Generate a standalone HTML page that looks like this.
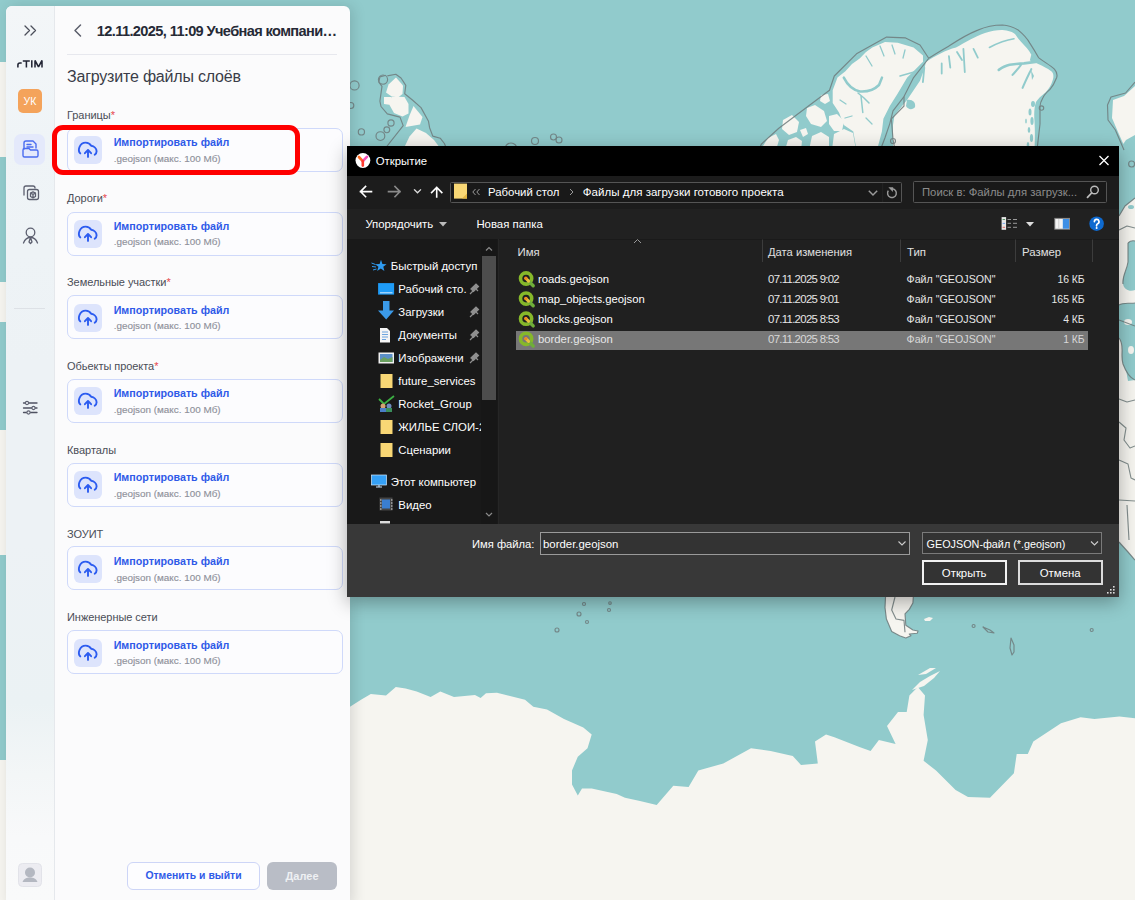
<!DOCTYPE html>
<html><head><meta charset="utf-8">
<style>
*{box-sizing:border-box;margin:0;padding:0}
html,body{width:1135px;height:900px;overflow:hidden;background:#91cbcc;font-family:"Liberation Sans",sans-serif}
#map{position:absolute;left:0;top:0;width:1135px;height:900px}
.w{position:absolute;white-space:nowrap}
.b{position:absolute}
svg.ico{position:absolute;overflow:visible}
</style></head><body>
<svg id="map" width="1135" height="900" viewBox="0 0 1135 900">
<rect width="1135" height="900" fill="#91cbcc"/>
<g fill="#f6f5f0" stroke="none">
<!-- bottom antarctica -->
<path d="M350,706.7 L361,699.7 370.8,694 386,695.5 395.8,687 405.6,688.6 416.7,691.4 430.6,697 440.3,691.4 454,697 475,695 480.6,698 486,693.3 497,692.8 525,699.7 533.3,706.7 547,709.4 564,719 583.3,727.5 591.7,734.4 587.5,748.3 577.8,756.7 572,770.5 572,784.4 577.8,795.5 582,788.6 591.7,788.6 616.7,794 625,797.8 640,801 656.7,805 673.3,785.8 688.6,787 698.3,770.5 723.3,763.6 751,748.3 770.6,751 792.8,756 801,765 817.8,763.6 815,741.4 826,734.4 834.4,737.2 859.4,747 870.6,751 878.9,740 895.6,744 887,726 898,712 906.7,712 909.4,695.5 917.8,687 925,695.5 923.6,715 927.8,740 923.6,760.8 936,770.5 955.6,790 968,797 990,797.8 1013.9,773.3 1016.7,754 1027.8,754 1033.3,741.4 1061,723.3 1080.6,717.2 1094.4,719 1119.4,716.4 1135,718.3 1135,900 350,900Z"/>
<!-- peninsula islands -->
<path d="M912,690 L920,682 930,676 940,671 934,678 924,686Z"/>
<path d="M918,675 L930,668 936,668 926,674Z"/>
<!-- lobe1 main -->
<path d="M845.4,71.2 L852,64 859.7,58.5 866,52 872.3,47.4 885,41.9 897.7,42.7 913.6,47.4 923,55.4 923,61.7 913.6,71.2 907.2,77.6 897.7,93.4 889.8,106.1 883.4,118.8 881.9,131.5 877,150 856.5,150 853.3,131.5 843.8,125.1 839,112.5 832.7,103 832.7,90.3 837.5,77.6Z"/>
<!-- lobe1 islands -->
<path d="M763,146 L768,138 776,134 779,140 776,150 762,150Z"/>
<path d="M783,120 L792,115 799,122 797,132 789,135 782,129Z"/>
<path d="M807,108 L815,105 824,111 827,121 821,127 811,124 806,116Z"/>
<path d="M821,95 L828,94 830,101 825,104 820,101Z"/>
<path d="M829,116 L837,114 844,121 842,131 834,131 829,124Z"/>
<path d="M785,150 L788,140 796,137 802,141 801,150Z"/>
<path d="M809,150 L812,136 821,132 829,137 829,150Z"/>
<path d="M832,150 L834,134 844,129 853,133 856,150Z"/>
<path d="M800,130 L806,128 808,134 803,137Z"/>
<!-- lobe2 -->
<path d="M925.8,62 C935,56 946,50 956,47.5 C966,42 976,36 985,33 C991,31 997,30 1002.4,30.1 C1008,30.5 1013,32 1015.4,34.5 C1017,37 1019,39.5 1021,41.7 C1025,46 1029,50 1031.3,54.7 L1029.8,60.5 C1036,63 1041,65 1045.7,67.7 C1049,69.5 1052,71 1053,73.5 C1054,77 1053,80 1051.5,83.6 C1050,87 1048,90 1045.7,92.3 C1041,96 1038,99 1036,102 C1034,108 1034,115 1034.5,121 C1035,130 1035,138 1034.5,150 L893,150 893,125 894.5,115.6 907.2,99.8 913.6,90.3 920,80.7 924.7,68Z"/>
<!-- left island group -->
<path d="M396,77.5 L403,85.5 402.5,94 398,97.5 391,96 386,92.5 388.5,84.5Z"/>
<path d="M391.5,96.5 L404.5,97 408.5,104 408.5,113.5 402.5,116.5 394,113 389.5,105Z"/>
<path d="M384,97 L391,97 391,105 384,104Z"/>
<path d="M413.5,106 L422.5,117 420,124.5 405.5,127 409.5,115.5Z"/>
<path d="M416.5,128.5 L426,133 434,140 441.5,150 403,150 409.5,136.5Z"/>
<!-- right island -->
<path d="M1113,100 L1124,96 1135,86 1135,150 1126,150 1118,132 1112,118Z"/>
<!-- right strip europe -->
<path d="M1119,216 L1125,206 1135,198 1135,560 1128,552 1119,542Z"/>
</g>
<g fill="#91cbcc">
<path d="M1128,243 C1131,240 1135,241 1135,241 L1135,290 C1130,292 1124,290 1123,284 C1122,276 1127,270 1128,262Z"/>
<path d="M1119,305 C1124,302 1130,304 1135,303 L1135,380 C1130,378 1126,372 1123,364 C1120,355 1125,345 1119,338Z"/>
<path d="M1126,370 L1135,368 1135,380 1128,381Z"/>
<ellipse cx="1131" cy="207" rx="3" ry="2"/>
</g>
<g fill="#f6f5f0">
<ellipse cx="1128" cy="322" rx="4" ry="3"/><ellipse cx="1131" cy="350" rx="3" ry="4"/>

<!-- south america tip -->
<path d="M885.5,597 L885,607.6 886.4,619 891.7,631.4 899.6,635.8 905.8,638 911,635.8 909.3,634 917.3,633.2 918,631 912.9,630 905.8,625.2 905,613.8 909.3,609.4 912.9,603 913.3,597Z"/>
<path d="M924,619 L929,617 933,618 930,621 925,621Z"/>
</g>
<!-- fjords -->
<g fill="none" stroke="#91cbcc" stroke-linecap="round" stroke-linejoin="round">
<path d="M843.8,77.6 C848,86 853,90 860,91.5 C868,92 875,89 879,85 L882,77.6" stroke-width="2.5"/>
<path d="M858,93 L864,98 869,103 M861,96 L862.8,112.5" stroke-width="1.5"/>
<path d="M866,56 L872,66 M880,46 L884,56 M892,45 L895,54 M905,50 L903,58" stroke-width="1.3"/>
<path d="M900,76 L914,72" stroke-width="1.5"/>
<path d="M840,100 L846,104 M845,118 L852,116 M866,118 L872,124" stroke-width="1.3"/>
<path d="M963.4,48.9 L964.8,72 M948.9,56.1 L950.3,67.7 M941.7,63.4 L941.7,73.5 M924.3,67.7 L922.9,82.1 M973.5,48.9 L977.8,57.6 M957,52 L962,60" stroke-width="1.8"/>
<path d="M989.4,47.5 C996,44 1006,40 1014,38.8" stroke-width="1.6"/>
<path d="M998.8,69.9 C1003,67 1006,65.5 1009.6,64.8 C1015,64 1020,63.5 1024,63.4 L1035.6,61.9" stroke-width="2.6"/>
<path d="M1021,64.8 C1018,69 1015,72 1012.5,74.9 M1031.3,69.1 C1028,76 1025,82 1022.6,87.9" stroke-width="2"/>
</g>
<g fill="#91cbcc">
<path d="M907,100 C912,99 916,102 915,107 C913,110 908,110 906,106Z"/>
<ellipse cx="1033" cy="104" rx="2" ry="3"/><ellipse cx="1030" cy="112" rx="1.5" ry="3.5"/><ellipse cx="1032" cy="121" rx="1.6" ry="4"/><ellipse cx="1029" cy="130" rx="1.3" ry="3"/><ellipse cx="1031.5" cy="138" rx="1.6" ry="4"/><ellipse cx="1028" cy="145" rx="1.3" ry="3"/><ellipse cx="1026" cy="121" rx="0.8" ry="2.5"/><path d="M1031,70 L1034,76 1032,80Z"/>
<path d="M1119,150 L1126,140 1135,135 1135,150Z"/>
</g>
<!-- grey outlines -->
<g fill="none" stroke="#6f7c7d" stroke-width="1.15" opacity="0.85" stroke-linejoin="round">
<path d="M759,150 L761.3,144.2 778.8,128.3 829.5,90.3 834.3,76 856.5,53.8 886.6,37.1 905.6,37.9 920,45 928.7,58.3 C935,54 942,50 948.9,46 C958,40 968,34 977.8,30.1 C985,27 994,25 1002.4,25 C1009,25.5 1014,27.5 1018.3,30.1 C1023,34 1027,38 1029.8,43.1 C1033,48 1036,53 1038.5,57.6 C1044,62 1050,65 1054.4,69.1 C1057,72 1057.5,75 1056.6,77.8 C1055,82 1053,86 1050,89.4 C1047,92 1044,95 1042.8,98 C1041,101 1040,104 1040,106.7 L1040,124 1037,150"/>
<path d="M928.6,58.5 L913.6,77.6 904,96.6 893,110.9 889.8,123.6 885,137.8 880.3,150"/>
<path d="M904,96.6 L904,106 891.4,118.8 893,139.4 895,150"/>
<circle cx="893" cy="141" r="2.5"/>
<path d="M387.3,75.9 L395.8,74.3 401,78 405.8,85.4 404.7,93.8 412.7,100.2 421,107.6 428.5,121.3 429.6,127.7 432.8,136.1 440.2,138.2 444.4,143.5 447,150"/>
<path d="M384,150 L403.2,125.6 400,117.1 387.3,113.9 381,106.5 379.9,101.2 382,86.4 378.8,82.2 379.9,76.9 386.2,75.3"/>
<path d="M1135,82 L1125.6,93 1111,97 1107.5,105 1108,120 1115.4,130 1124,150"/>
<path d="M885.5,597 L885,607.6 886.4,619 891.7,631.4 899.6,635.8 905.8,638 911,635.8 909.3,634 917.3,633.2 918,631 912.9,630 905.8,625.2 905,613.8 909.3,609.4 912.9,603 913.3,597"/>
<path d="M895,597 L891.7,610 896,619 904,620.4 905,632.3"/>
<path d="M1119,216 L1125,206 1135,198 M1119,230 L1127,226 1135,228 M1128,243 C1131,240 1135,241 1135,241 M1123,284 C1122,276 1127,270 1128,262 L1128,243 M1119,305 C1124,302 1130,304 1135,303 M1119,338 C1125,345 1120,355 1123,364 C1126,372 1130,378 1135,380 M1119,320 L1135,326 M1119,399 L1127,402 1135,400 M1119,422 L1126,428 1124,440 1130,448 1135,446 M1119,460 L1128,464 1131,478 1135,480 M1119,500 L1135,501 M1119,542 L1128,552 1135,560 M1127,505 L1129,540"/>
<circle cx="383" cy="79.6" r="4.6"/>
<circle cx="354.5" cy="85.4" r="4.6"/>
<circle cx="391" cy="123" r="3.1"/>
<circle cx="361.4" cy="131.9" r="3.1"/>
<circle cx="386.8" cy="129.8" r="2.9"/>
<circle cx="380.4" cy="136.1" r="4.4"/>
<circle cx="350.8" cy="105.5" r="3"/>
<circle cx="535" cy="141" r="3.5"/>
<circle cx="553.5" cy="137" r="3"/>
<circle cx="559" cy="140" r="3"/>
<circle cx="511" cy="149" r="6"/>
<circle cx="1131.6" cy="164" r="3"/>
<circle cx="1041.5" cy="108" r="2.2"/>
<circle cx="584" cy="604" r="1.5"/>
<circle cx="579" cy="614" r="2"/>
<circle cx="587" cy="622" r="1.5"/>
<circle cx="557" cy="630" r="2"/>
<circle cx="610" cy="603" r="1.3"/>
<circle cx="609" cy="610" r="1.5"/>
<circle cx="973.6" cy="626" r="1.5"/>
<circle cx="1091.7" cy="630" r="1.5"/>
<path d="M983,627 L990,630 994,633 988,632Z"/>
<path d="M1011,638 L1014,645 1014,652 1012,655 1010,648Z"/>
</g>
<g fill="#f6f5f0"><rect x="0" y="62" width="8" height="95"/><rect x="0" y="282" width="8" height="40"/><rect x="0" y="430" width="8" height="125"/><rect x="0" y="760" width="8" height="140"/></g>
</svg>
<div class="b" style="left:6px;top:6px;width:344px;height:900px;border-radius:6px 6px 0 0;box-shadow:3px 0 14px rgba(0,0,0,.13);background:#fbfbfc"></div>
<div class="b" style="left:6px;top:6px;width:49px;height:894px;border-radius:6px 0 0 0;background:linear-gradient(180deg,#f3f6f8 0%,#eff4f7 15%,#edf2f5 40%,#edf2f5 60%,#ebf2f4 78%,#f3f6f7 86%,#f8f9fa 93%,#f9fafa 100%);border-right:1px solid #e5e8ec"></div>
<svg class="ico" style="left:0;top:0" width="60" height="900" viewBox="0 0 60 900">
<g fill="none" stroke="#4b4e5a" stroke-width="1.3" stroke-linecap="round" stroke-linejoin="round">
<path d="M25,26 L29.5,30.5 L25,35 M31,26 L35.5,30.5 L31,35"/>
</g>
<rect x="18" y="89" width="24" height="24" rx="5" fill="#f4a35b"/>
<rect x="14" y="134" width="31" height="31" rx="7" fill="#e4e9fb"/>
<g fill="none" stroke="#4a6cf0" stroke-width="1.4" stroke-linejoin="round" stroke-linecap="round">
<path d="M24,149 V143 a2,2 0 0 1 2,-2 H33 l3,3 V148"/>
<path d="M27,144.5 H31 M27,147 H33"/>
<path d="M23,150 a1.5,1.5 0 0 1 1.5,-1.5 H29 l1.5,1.5 H36.5 a1.5,1.5 0 0 1 1.5,1.5 V155.5 a1.5,1.5 0 0 1 -1.5,1.5 H24.5 a1.5,1.5 0 0 1 -1.5,-1.5 Z"/>
</g>
<g fill="none" stroke="#5d6070" stroke-width="1.3" stroke-linejoin="round" stroke-linecap="round">
<path d="M24,195 V188 a2,2 0 0 1 2,-2 H33 a2,2 0 0 1 2,2"/>
<rect x="27.5" y="189.5" width="11" height="10" rx="2"/>
<path d="M30.5,193 L33,191.8 35.5,193 V196.5 L33,197.8 30.5,196.5 Z M30.5,193 L33,194.3 35.5,193 M33,194.3 V197.8"/>
</g>
<g fill="none" stroke="#5d6070" stroke-width="1.3" stroke-linejoin="round" stroke-linecap="round">
<circle cx="30.5" cy="232.5" r="4.3"/>
<path d="M23.5,243 C25,239 27.5,237.5 30.5,237.5 C33.5,237.5 36,239 37.5,243"/>
<path d="M30.5,237.5 L29,242 L30.5,243.5 L32,242 Z"/>
</g>
<line x1="14" y1="308.5" x2="45" y2="308.5" stroke="#dde1e6" stroke-width="1"/>
<g fill="none" stroke="#4f5261" stroke-width="1.3" stroke-linecap="round">
<path d="M23.5,403 H37 M23.5,408 H37 M23.5,412.5 H37"/>
</g>
<g fill="#edf2f5" stroke="#5d6070" stroke-width="1.1">
<circle cx="27" cy="403" r="1.6"/><circle cx="33.5" cy="408" r="1.6"/><circle cx="28.5" cy="412.5" r="1.6"/>
</g>
<rect x="18.5" y="863.5" width="23" height="23" rx="4" fill="#ececf1" stroke="#e2e3e9"/>
<circle cx="30" cy="872.5" r="5" fill="#b4b8c1"/>
<path d="M22.5,882 C24,878.5 26.5,877.5 30,877.5 C33.5,877.5 36,878.5 37.5,882 Z" fill="#b4b8c1"/>
</svg>
<svg class="ico" style="left:0;top:0" width="60" height="80" viewBox="0 0 60 80"><g fill="none" stroke="#232635" stroke-width="1.55" stroke-linejoin="miter" stroke-linecap="butt">
<path d="M17.9,67.6 V65 Q17.9,63 20,63 H21.7"/>
<path d="M22.8,61 H29.8 M26.4,61 V67.6"/>
<path d="M31.8,60.3 V67.6"/>
<path d="M35,67.6 V60.5 L38.5,66.8 L42,60.5 V67.6" stroke-linejoin="bevel"/>
</g></svg>
<div class="w" style="left:-120.0px;width:300px;text-align:center;top:94.66px;font-size:10.5px;line-height:13px;font-weight:400;color:#fff;">УК</div>
<svg class="ico" style="left:0;top:0" width="350" height="60" viewBox="0 0 350 60">
<path d="M80.5,25 L75,30.5 L80.5,36" fill="none" stroke="#5b5e6b" stroke-width="1.5" stroke-linecap="round" stroke-linejoin="round"/>
<line x1="67" y1="54.5" x2="337" y2="54.5" stroke="#e7e8ee" stroke-width="1"/>
</svg>
<div class="w" style="left:96.8px;top:21.84px;font-size:14.6px;line-height:18px;font-weight:700;color:#262a36;letter-spacing:-0.62px">12.11.2025, 11:09 Учебная компани…</div>
<div class="w" style="left:67.0px;top:67.16px;font-size:16px;line-height:20px;font-weight:400;color:#3a3d48;letter-spacing:-0.2px">Загрузите файлы слоёв</div>
<div class="w" style="left:67.0px;top:107.69px;font-size:11px;line-height:14px;font-weight:400;color:#4a4d57;letter-spacing:-0.05px">Границы<span style="color:#e5484d">*</span></div>
<div class="b" style="left:67.2px;top:127.80px;width:276px;height:44px;border:1px solid #cfd9fa;border-radius:7px;background:#fcfcfe"><div class="b" style="left:5.8px;top:7.4px;width:28px;height:28px;border-radius:6px;background:#dde4fc"></div><svg class="ico" style="left:5.8px;top:7.4px" width="28" height="28" viewBox="0 0 28 28"><g fill="none" stroke="#2c5cf0" stroke-width="1.9" stroke-linecap="round" stroke-linejoin="round"><path d="M6.3,17.4 C4.9,16 4.6,13.4 5.4,11.2 C6.5,8.3 9,6.6 11.7,6.6 C14.2,6.6 16.1,7.9 17.2,9.8 C20,10.3 22.6,12.5 22.6,15.3 C22.6,16.8 21.9,18 20.7,18.8"/><path d="M14,20.9 V14.3 M10.9,17.2 L14,14 L17.1,17.2"/></g></svg></div>
<div class="w" style="left:113.7px;top:136.09px;font-size:10.7px;line-height:13px;font-weight:700;color:#2f5ae8;">Импортировать файл</div>
<div class="w" style="left:113.7px;top:152.57px;font-size:9.9px;line-height:12px;font-weight:400;color:#8f919b;-webkit-text-stroke:0.15px #8f919b">.geojson (макс. 100 Мб)</div>
<div class="w" style="left:67.0px;top:191.49px;font-size:11px;line-height:14px;font-weight:400;color:#4a4d57;letter-spacing:-0.05px">Дороги<span style="color:#e5484d">*</span></div>
<div class="b" style="left:67.2px;top:211.52px;width:276px;height:44px;border:1px solid #cfd9fa;border-radius:7px;background:#fcfcfe"><div class="b" style="left:5.8px;top:7.4px;width:28px;height:28px;border-radius:6px;background:#dde4fc"></div><svg class="ico" style="left:5.8px;top:7.4px" width="28" height="28" viewBox="0 0 28 28"><g fill="none" stroke="#2c5cf0" stroke-width="1.9" stroke-linecap="round" stroke-linejoin="round"><path d="M6.3,17.4 C4.9,16 4.6,13.4 5.4,11.2 C6.5,8.3 9,6.6 11.7,6.6 C14.2,6.6 16.1,7.9 17.2,9.8 C20,10.3 22.6,12.5 22.6,15.3 C22.6,16.8 21.9,18 20.7,18.8"/><path d="M14,20.9 V14.3 M10.9,17.2 L14,14 L17.1,17.2"/></g></svg></div>
<div class="w" style="left:113.7px;top:219.89px;font-size:10.7px;line-height:13px;font-weight:700;color:#2f5ae8;">Импортировать файл</div>
<div class="w" style="left:113.7px;top:236.37px;font-size:9.9px;line-height:12px;font-weight:400;color:#8f919b;-webkit-text-stroke:0.15px #8f919b">.geojson (макс. 100 Мб)</div>
<div class="w" style="left:67.0px;top:275.29px;font-size:11px;line-height:14px;font-weight:400;color:#4a4d57;letter-spacing:-0.05px">Земельные участки<span style="color:#e5484d">*</span></div>
<div class="b" style="left:67.2px;top:295.24px;width:276px;height:44px;border:1px solid #cfd9fa;border-radius:7px;background:#fcfcfe"><div class="b" style="left:5.8px;top:7.4px;width:28px;height:28px;border-radius:6px;background:#dde4fc"></div><svg class="ico" style="left:5.8px;top:7.4px" width="28" height="28" viewBox="0 0 28 28"><g fill="none" stroke="#2c5cf0" stroke-width="1.9" stroke-linecap="round" stroke-linejoin="round"><path d="M6.3,17.4 C4.9,16 4.6,13.4 5.4,11.2 C6.5,8.3 9,6.6 11.7,6.6 C14.2,6.6 16.1,7.9 17.2,9.8 C20,10.3 22.6,12.5 22.6,15.3 C22.6,16.8 21.9,18 20.7,18.8"/><path d="M14,20.9 V14.3 M10.9,17.2 L14,14 L17.1,17.2"/></g></svg></div>
<div class="w" style="left:113.7px;top:303.69px;font-size:10.7px;line-height:13px;font-weight:700;color:#2f5ae8;">Импортировать файл</div>
<div class="w" style="left:113.7px;top:320.17px;font-size:9.9px;line-height:12px;font-weight:400;color:#8f919b;-webkit-text-stroke:0.15px #8f919b">.geojson (макс. 100 Мб)</div>
<div class="w" style="left:67.0px;top:359.09px;font-size:11px;line-height:14px;font-weight:400;color:#4a4d57;letter-spacing:-0.05px">Обьекты проекта<span style="color:#e5484d">*</span></div>
<div class="b" style="left:67.2px;top:378.96px;width:276px;height:44px;border:1px solid #cfd9fa;border-radius:7px;background:#fcfcfe"><div class="b" style="left:5.8px;top:7.4px;width:28px;height:28px;border-radius:6px;background:#dde4fc"></div><svg class="ico" style="left:5.8px;top:7.4px" width="28" height="28" viewBox="0 0 28 28"><g fill="none" stroke="#2c5cf0" stroke-width="1.9" stroke-linecap="round" stroke-linejoin="round"><path d="M6.3,17.4 C4.9,16 4.6,13.4 5.4,11.2 C6.5,8.3 9,6.6 11.7,6.6 C14.2,6.6 16.1,7.9 17.2,9.8 C20,10.3 22.6,12.5 22.6,15.3 C22.6,16.8 21.9,18 20.7,18.8"/><path d="M14,20.9 V14.3 M10.9,17.2 L14,14 L17.1,17.2"/></g></svg></div>
<div class="w" style="left:113.7px;top:387.49px;font-size:10.7px;line-height:13px;font-weight:700;color:#2f5ae8;">Импортировать файл</div>
<div class="w" style="left:113.7px;top:403.97px;font-size:9.9px;line-height:12px;font-weight:400;color:#8f919b;-webkit-text-stroke:0.15px #8f919b">.geojson (макс. 100 Мб)</div>
<div class="w" style="left:67.0px;top:442.89px;font-size:11px;line-height:14px;font-weight:400;color:#4a4d57;letter-spacing:-0.05px">Кварталы</div>
<div class="b" style="left:67.2px;top:462.68px;width:276px;height:44px;border:1px solid #cfd9fa;border-radius:7px;background:#fcfcfe"><div class="b" style="left:5.8px;top:7.4px;width:28px;height:28px;border-radius:6px;background:#dde4fc"></div><svg class="ico" style="left:5.8px;top:7.4px" width="28" height="28" viewBox="0 0 28 28"><g fill="none" stroke="#2c5cf0" stroke-width="1.9" stroke-linecap="round" stroke-linejoin="round"><path d="M6.3,17.4 C4.9,16 4.6,13.4 5.4,11.2 C6.5,8.3 9,6.6 11.7,6.6 C14.2,6.6 16.1,7.9 17.2,9.8 C20,10.3 22.6,12.5 22.6,15.3 C22.6,16.8 21.9,18 20.7,18.8"/><path d="M14,20.9 V14.3 M10.9,17.2 L14,14 L17.1,17.2"/></g></svg></div>
<div class="w" style="left:113.7px;top:471.29px;font-size:10.7px;line-height:13px;font-weight:700;color:#2f5ae8;">Импортировать файл</div>
<div class="w" style="left:113.7px;top:487.77px;font-size:9.9px;line-height:12px;font-weight:400;color:#8f919b;-webkit-text-stroke:0.15px #8f919b">.geojson (макс. 100 Мб)</div>
<div class="w" style="left:67.0px;top:526.69px;font-size:11px;line-height:14px;font-weight:400;color:#4a4d57;letter-spacing:-0.05px">ЗОУИТ</div>
<div class="b" style="left:67.2px;top:546.40px;width:276px;height:44px;border:1px solid #cfd9fa;border-radius:7px;background:#fcfcfe"><div class="b" style="left:5.8px;top:7.4px;width:28px;height:28px;border-radius:6px;background:#dde4fc"></div><svg class="ico" style="left:5.8px;top:7.4px" width="28" height="28" viewBox="0 0 28 28"><g fill="none" stroke="#2c5cf0" stroke-width="1.9" stroke-linecap="round" stroke-linejoin="round"><path d="M6.3,17.4 C4.9,16 4.6,13.4 5.4,11.2 C6.5,8.3 9,6.6 11.7,6.6 C14.2,6.6 16.1,7.9 17.2,9.8 C20,10.3 22.6,12.5 22.6,15.3 C22.6,16.8 21.9,18 20.7,18.8"/><path d="M14,20.9 V14.3 M10.9,17.2 L14,14 L17.1,17.2"/></g></svg></div>
<div class="w" style="left:113.7px;top:555.09px;font-size:10.7px;line-height:13px;font-weight:700;color:#2f5ae8;">Импортировать файл</div>
<div class="w" style="left:113.7px;top:571.57px;font-size:9.9px;line-height:12px;font-weight:400;color:#8f919b;-webkit-text-stroke:0.15px #8f919b">.geojson (макс. 100 Мб)</div>
<div class="w" style="left:67.0px;top:610.49px;font-size:11px;line-height:14px;font-weight:400;color:#4a4d57;letter-spacing:-0.05px">Инженерные сети</div>
<div class="b" style="left:67.2px;top:630.12px;width:276px;height:44px;border:1px solid #cfd9fa;border-radius:7px;background:#fcfcfe"><div class="b" style="left:5.8px;top:7.4px;width:28px;height:28px;border-radius:6px;background:#dde4fc"></div><svg class="ico" style="left:5.8px;top:7.4px" width="28" height="28" viewBox="0 0 28 28"><g fill="none" stroke="#2c5cf0" stroke-width="1.9" stroke-linecap="round" stroke-linejoin="round"><path d="M6.3,17.4 C4.9,16 4.6,13.4 5.4,11.2 C6.5,8.3 9,6.6 11.7,6.6 C14.2,6.6 16.1,7.9 17.2,9.8 C20,10.3 22.6,12.5 22.6,15.3 C22.6,16.8 21.9,18 20.7,18.8"/><path d="M14,20.9 V14.3 M10.9,17.2 L14,14 L17.1,17.2"/></g></svg></div>
<div class="w" style="left:113.7px;top:638.89px;font-size:10.7px;line-height:13px;font-weight:700;color:#2f5ae8;">Импортировать файл</div>
<div class="w" style="left:113.7px;top:655.37px;font-size:9.9px;line-height:12px;font-weight:400;color:#8f919b;-webkit-text-stroke:0.15px #8f919b">.geojson (макс. 100 Мб)</div>
<div class="b" style="left:52.1px;top:124.8px;width:247.7px;height:50.1px;border:5.9px solid #ff0000;border-radius:11px"></div>
<div class="b" style="left:127px;top:862px;width:133px;height:27.5px;border:1px solid #cdd5f7;border-radius:6px;background:#fdfdff"></div>
<div class="w" style="left:43.5px;width:300px;text-align:center;top:869.40px;font-size:10.4px;line-height:13px;font-weight:700;color:#2f5ae8;">Отменить и выйти</div>
<div class="b" style="left:267px;top:862px;width:70px;height:27.5px;border-radius:6px;background:#b9bdc6"></div>
<div class="w" style="left:152.0px;width:300px;text-align:center;top:868.69px;font-size:11px;line-height:14px;font-weight:700;color:#eef0f3;">Далее</div>
<div class="b" style="left:347px;top:146px;width:772px;height:451px;background:#202020;box-shadow:0 5px 18px rgba(0,0,0,.32)"></div>
<div class="b" style="left:347px;top:146px;width:772px;height:30px;background:#000"></div>
<div class="b" style="left:347px;top:176px;width:772px;height:33px;background:#1c1c1c"></div>
<div class="b" style="left:347px;top:209px;width:772px;height:29.5px;background:#212121"></div>
<div class="b" style="left:347px;top:238.5px;width:772px;height:1px;background:#1a1a1a"></div>
<div class="b" style="left:347px;top:239px;width:152px;height:284.5px;background:#191919"></div>
<div class="b" style="left:481px;top:239px;width:16px;height:284.5px;background:#171717"></div>
<div class="b" style="left:482px;top:255.8px;width:14.3px;height:144.2px;background:#4d4d4d"></div>
<div class="b" style="left:498px;top:239px;width:1px;height:284.5px;background:#262626"></div>
<div class="b" style="left:347px;top:523.5px;width:772px;height:73.5px;background:#383838"></div>
<div class="b" style="left:449.5px;top:181.5px;width:452px;height:21px;border:1px solid #555;border-radius:1.5px;background:#191919"></div>
<div class="b" style="left:913px;top:181.4px;width:194px;height:21.3px;border:1px solid #555;border-radius:1.5px;background:#191919"></div>
<div class="b" style="left:515.6px;top:330.7px;width:572.4px;height:19.5px;background:#777"></div>
<div class="b" style="left:539.5px;top:532.2px;width:370.7px;height:22.8px;border:1px solid #9a9a9a;background:#333"></div>
<div class="b" style="left:922px;top:532px;width:180.4px;height:22px;border:1px solid #7a7a7a;background:#333"></div>
<div class="b" style="left:922px;top:560.2px;width:84.5px;height:24.8px;border:2px solid #f2f2f2;background:#333"></div>
<div class="b" style="left:1018px;top:560.2px;width:84.5px;height:24.8px;border:2px solid #dcdcdc;background:#333"></div>
<svg class="ico" style="left:0;top:0" width="1135" height="900" viewBox="0 0 1135 900">
<circle cx="362.9" cy="160.5" r="7.4" fill="#fff"/>
<path d="M358.9,157 L362.8,161.2" fill="none" stroke="#ff6a1f" stroke-width="2.6" stroke-linecap="round"/>
<path d="M366.9,156.8 L362.8,161.2" fill="none" stroke="#f54fb8" stroke-width="2.6" stroke-linecap="round"/>
<path d="M362.8,161 V165.6" fill="none" stroke="#ff3b30" stroke-width="2.6" stroke-linecap="round"/>
<path d="M1099.5,156 L1108.5,165 M1108.5,156 L1099.5,165" stroke="#fff" stroke-width="1.3"/>
<g fill="none" stroke-width="1.6" stroke-linecap="square">
<path d="M360.5,191.6 H371.5 M365.6,186.5 L360.5,191.6 L365.6,196.7" stroke="#fff"/>
<path d="M388.5,191.6 H400 M395,186.5 L400,191.6 L395,196.7" stroke="#8a8a8a"/>
<path d="M414.5,189.8 L417.5,192.8 L420.5,189.8" stroke="#ddd" stroke-width="1.3"/>
<path d="M436.7,197 V187.5 M431.6,192.6 L436.7,187.5 L441.8,192.6" stroke="#fff"/>
</g>
<rect x="454" y="183.6" width="13" height="15" fill="#f8d775"/>
<path d="M462,198.6 L467,193.6 V198.6Z" fill="#e3b641"/>
<path d="M475.5,189 L472.8,192 L475.5,195 M479.5,189 L476.8,192 L479.5,195" fill="none" stroke="#9a9a9a" stroke-width="1"/>
<path d="M570,189 L573,192 L570,195" fill="none" stroke="#9a9a9a" stroke-width="1"/>
<path d="M868.8,190.8 L873,195 L877.2,190.8" fill="none" stroke="#9a9a9a" stroke-width="1.5"/>
<line x1="882.7" y1="183" x2="882.7" y2="202" stroke="#242424"/>
<path d="M888.3,190.7 A4.4,4.4 0 1 0 892.4,188.8" fill="none" stroke="#9a9a9a" stroke-width="1.5"/>
<path d="M888.4,187.2 L893.2,187.2 L892.8,192 Z" fill="#9a9a9a"/>
<circle cx="1094.5" cy="190" r="3.8" fill="none" stroke="#bbb" stroke-width="1.4"/>
<path d="M1091.6,193 L1087.5,197.3" stroke="#bbb" stroke-width="1.8" stroke-linecap="round"/>
<path d="M439,222 H447 L443,226.5 Z" fill="#bbb"/>
<rect x="1001.6" y="217.1" width="4.5" height="12.7" fill="#e8e8e8"/>
<path d="M1002.6,219.5 h2.5" stroke="#5a9a6a" stroke-width="1"/><path d="M1002.6,223.4 h2.5" stroke="#7aa8ee" stroke-width="1"/><path d="M1002.6,227.3 h2.5" stroke="#e86a6a" stroke-width="1"/>
<path d="M1007.5,219.5 h3.5 M1013,219.5 h4 M1007.5,223.3 h3.5 M1013,223.3 h4 M1007.5,227.3 h3.5 M1013,227.3 h4" stroke="#9a9a9a" stroke-width="1"/>
<path d="M1026,222 H1034 L1030,226.5 Z" fill="#ddd"/>
<rect x="1054.3" y="217.9" width="15.7" height="11.8" fill="#8a8a8a"/>
<rect x="1055.3" y="219" width="13.7" height="9.7" fill="#f4f4f4"/>
<rect x="1058.3" y="219" width="1" height="9.7" fill="#cfcfcf"/>
<rect x="1062.8" y="219" width="6.2" height="9.7" fill="#3d8fe6"/>
<circle cx="1096.6" cy="223.7" r="7.3" fill="#0e6ad0"/>
<path d="M1094.4,221.6 a2.3,2.3 0 1 1 3.3,2.1 c-.8,.4 -1.1,.9 -1.1,1.6 v.5" fill="none" stroke="#fff" stroke-width="1.7" stroke-linecap="round"/>
<circle cx="1096.6" cy="228" r="1" fill="#fff"/>
<path d="M634,243 L637.5,239.5 L641,243" fill="none" stroke="#999" stroke-width="1"/>
<g stroke="#3c3c3c" stroke-width="1">
<line x1="762.5" y1="239.5" x2="762.5" y2="262"/>
<line x1="900.5" y1="239.5" x2="900.5" y2="262"/>
<line x1="1015.5" y1="239.5" x2="1015.5" y2="262"/>
<line x1="1092.5" y1="239.5" x2="1092.5" y2="262"/>
</g>
<path d="M486,250.5 L489,247.5 L492,250.5" fill="none" stroke="#8a8a8a" stroke-width="1.2"/>
<path d="M486,513 L489,516 L492,513" fill="none" stroke="#8a8a8a" stroke-width="1.2"/>
<path d="M898.5,541.5 L902,545 L905.5,541.5" fill="none" stroke="#ccc" stroke-width="1.1"/>
<path d="M1091,541.5 L1094.5,545 L1098,541.5" fill="none" stroke="#ccc" stroke-width="1.1"/>
<g fill="#ddd"><rect x="1113" y="586" width="1.6" height="1.6"/><rect x="1110" y="589" width="1.6" height="1.6"/><rect x="1113" y="589" width="1.6" height="1.6"/><rect x="1107" y="592" width="1.6" height="1.6"/><rect x="1110" y="592" width="1.6" height="1.6"/><rect x="1113" y="592" width="1.6" height="1.6"/></g>
<path d="M381,259.8 L382.4,264 L386.6,264.2 L383.3,266.8 L384.4,271 L380.8,268.5 L377.2,271 L378.4,266.8 L375.2,264.2 L379.6,264 Z" fill="#2f9bf0"/>
<path d="M371.5,263 L375.5,264.5 M372,266.5 L376,267 M373,270 L376.5,269" stroke="#2f9bf0" stroke-width="1"/>
<rect x="378.1" y="283.1" width="16" height="11.5" fill="#1e9cf8"/>
<path d="M380,292.8 H392.5" stroke="#e6f3ff" stroke-width="0.9"/>
<path d="M383,301 H389.5 V310.5 H394 L386.2,319.5 L378,310.5 H383 Z" fill="#3b9ae8"/>
<path d="M380,328 H387 L390,331 V342.5 H380 Z" fill="#f4f4f4"/>
<path d="M382,332 H388 M382,334.5 H388 M382,337 H388 M382,339.5 H386" stroke="#4a90d9" stroke-width="0.8"/>
<rect x="378.5" y="352.5" width="15.5" height="11" fill="#f0f0f0"/>
<rect x="380" y="354" width="12.5" height="8" fill="#5b8fc8"/>
<path d="M380,360 L384,357 L388,359 L392.5,357 V362 H380 Z" fill="#6aa060"/>
<g fill="#f8d775"><rect x="380.5" y="374" width="12" height="14"/><rect x="380.5" y="420" width="12" height="14"/><rect x="380.5" y="443" width="12" height="14"/></g>
<path d="M379,399 L384,404 L394,396" fill="none" stroke="#3cb043" stroke-width="1.8"/>
<circle cx="383" cy="406" r="2.5" fill="#d4a373"/><circle cx="389" cy="406" r="2.5" fill="#6c8ebf"/>
<rect x="380" y="408" width="6" height="4" fill="#4a7ec8"/><rect x="386" y="408" width="6" height="4" fill="#3a8e5c"/>
<rect x="371.5" y="475" width="15" height="10" fill="#35a0f5" stroke="#cfe8ff" stroke-width="0.7"/>
<path d="M376,487 H382 M379,485 V487" stroke="#cfe8ff" stroke-width="1"/>
<rect x="379.5" y="497.5" width="13" height="13" fill="#444"/>
<rect x="382" y="499.5" width="8" height="9" fill="#3a7ed0"/>
<path d="M380,500 h1.5 M380,503 h1.5 M380,506 h1.5 M380,509 h1.5 M391,500 h1.5 M391,503 h1.5 M391,506 h1.5 M391,509 h1.5" stroke="#ddd" stroke-width="1"/>
<path d="M380,521 H390 V523.5 H380Z" fill="#ddd"/>
<g fill="#8f8f8f">
<path d="M471,289 l5,-5 l2.5,2.5 l-5,5Z M470,294 l3,-3 M473.5,286.5 l4.5,4.5" stroke="#8f8f8f" stroke-width="1.2"/>
<path d="M471,312 l5,-5 l2.5,2.5 l-5,5Z M470,317 l3,-3 M473.5,309.5 l4.5,4.5" stroke="#8f8f8f" stroke-width="1.2"/>
<path d="M471,335 l5,-5 l2.5,2.5 l-5,5Z M470,340 l3,-3 M473.5,332.5 l4.5,4.5" stroke="#8f8f8f" stroke-width="1.2"/>
<path d="M471,358 l5,-5 l2.5,2.5 l-5,5Z M470,363 l3,-3 M473.5,355.5 l4.5,4.5" stroke="#8f8f8f" stroke-width="1.2"/>
</g>
<circle cx="526.1" cy="278.5" r="5.6" fill="none" stroke="#86b82a" stroke-width="3.6"/><path d="M528.6,281.1 L533.2,285.7" stroke="#6fae3a" stroke-width="3.4" stroke-linecap="round"/><path d="M526,278.5 L528.6,281.1" stroke="#e8c040" stroke-width="3" stroke-linecap="round"/><circle cx="525.8" cy="278.3" r="1.7" fill="#f08a24"/>
<circle cx="526.1" cy="298.6" r="5.6" fill="none" stroke="#86b82a" stroke-width="3.6"/><path d="M528.6,301.2 L533.2,305.8" stroke="#6fae3a" stroke-width="3.4" stroke-linecap="round"/><path d="M526,298.6 L528.6,301.2" stroke="#e8c040" stroke-width="3" stroke-linecap="round"/><circle cx="525.8" cy="298.4" r="1.7" fill="#f08a24"/>
<circle cx="526.1" cy="318.7" r="5.6" fill="none" stroke="#86b82a" stroke-width="3.6"/><path d="M528.6,321.3 L533.2,325.9" stroke="#6fae3a" stroke-width="3.4" stroke-linecap="round"/><path d="M526,318.7 L528.6,321.3" stroke="#e8c040" stroke-width="3" stroke-linecap="round"/><circle cx="525.8" cy="318.5" r="1.7" fill="#f08a24"/>
<circle cx="526.1" cy="338.8" r="5.6" fill="none" stroke="#86b82a" stroke-width="3.6"/><path d="M528.6,341.4 L533.2,346.0" stroke="#6fae3a" stroke-width="3.4" stroke-linecap="round"/><path d="M526,338.8 L528.6,341.4" stroke="#e8c040" stroke-width="3" stroke-linecap="round"/><circle cx="525.8" cy="338.6" r="1.7" fill="#f08a24"/>
</svg>
<div class="w" style="left:375.7px;top:154.45px;font-size:11.4px;line-height:14px;font-weight:400;color:#fff;">Открытие</div>
<div class="w" style="left:488.0px;top:185.25px;font-size:11.4px;line-height:14px;font-weight:400;color:#fff;">Рабочий стол</div>
<div class="w" style="left:582.8px;top:185.20px;font-size:11.55px;line-height:14px;font-weight:400;color:#fff;">Файлы для загрузки готового проекта</div>
<div class="w" style="left:922.0px;top:185.08px;font-size:11.3px;line-height:14px;font-weight:400;color:#8c8c8c;">Поиск в: Файлы для загрузк...</div>
<div class="w" style="left:365.4px;top:217.05px;font-size:11.4px;line-height:14px;font-weight:400;color:#fff;">Упорядочить</div>
<div class="w" style="left:476.4px;top:217.05px;font-size:11.4px;line-height:14px;font-weight:400;color:#fff;">Новая папка</div>
<div class="w" style="left:517.5px;top:244.55px;font-size:11.4px;line-height:14px;font-weight:400;color:#e0e0e0;">Имя</div>
<div class="w" style="left:768.0px;top:244.62px;font-size:11.2px;line-height:14px;font-weight:400;color:#e0e0e0;">Дата изменения</div>
<div class="w" style="left:907.0px;top:244.55px;font-size:11.4px;line-height:14px;font-weight:400;color:#e0e0e0;">Тип</div>
<div class="w" style="left:1022.0px;top:244.55px;font-size:11.4px;line-height:14px;font-weight:400;color:#e0e0e0;">Размер</div>
<div class="w" style="left:538.0px;top:272.08px;font-size:11.3px;line-height:14px;font-weight:400;color:#fff;">roads.geojson</div>
<div class="w" style="left:768.0px;top:272.05px;font-size:11.4px;line-height:14px;font-weight:400;color:#e6e6e6;letter-spacing:-0.7px">07.11.2025 9:02</div>
<div class="w" style="left:906.5px;top:272.79px;font-size:10.7px;line-height:13px;font-weight:400;color:#e6e6e6;">Файл "GEOJSON"</div>
<div class="w" style="right:50.3px;top:272.90px;font-size:10.4px;line-height:13px;font-weight:400;color:#e6e6e6;text-align:right;">16 КБ</div>
<div class="w" style="left:538.0px;top:292.18px;font-size:11.3px;line-height:14px;font-weight:400;color:#fff;">map_objects.geojson</div>
<div class="w" style="left:768.0px;top:292.15px;font-size:11.4px;line-height:14px;font-weight:400;color:#e6e6e6;letter-spacing:-0.7px">07.11.2025 9:01</div>
<div class="w" style="left:906.5px;top:292.89px;font-size:10.7px;line-height:13px;font-weight:400;color:#e6e6e6;">Файл "GEOJSON"</div>
<div class="w" style="right:50.3px;top:293.00px;font-size:10.4px;line-height:13px;font-weight:400;color:#e6e6e6;text-align:right;">165 КБ</div>
<div class="w" style="left:538.0px;top:312.28px;font-size:11.3px;line-height:14px;font-weight:400;color:#fff;">blocks.geojson</div>
<div class="w" style="left:768.0px;top:312.25px;font-size:11.4px;line-height:14px;font-weight:400;color:#e6e6e6;letter-spacing:-0.7px">07.11.2025 8:53</div>
<div class="w" style="left:906.5px;top:312.99px;font-size:10.7px;line-height:13px;font-weight:400;color:#e6e6e6;">Файл "GEOJSON"</div>
<div class="w" style="right:50.3px;top:313.10px;font-size:10.4px;line-height:13px;font-weight:400;color:#e6e6e6;text-align:right;">4 КБ</div>
<div class="w" style="left:538.0px;top:332.38px;font-size:11.3px;line-height:14px;font-weight:400;color:#e8e8e8;">border.geojson</div>
<div class="w" style="left:768.0px;top:332.35px;font-size:11.4px;line-height:14px;font-weight:400;color:#d8d8d8;letter-spacing:-0.7px">07.11.2025 8:53</div>
<div class="w" style="left:906.5px;top:333.09px;font-size:10.7px;line-height:13px;font-weight:400;color:#d8d8d8;">Файл "GEOJSON"</div>
<div class="w" style="right:50.3px;top:333.20px;font-size:10.4px;line-height:13px;font-weight:400;color:#d8d8d8;text-align:right;">1 КБ</div>
<div class="b" style="left:347px;top:239px;width:134px;height:284.5px;overflow:hidden"><div class="w" style="left:43.8px;top:20.05px;font-size:11.4px;line-height:14px;font-weight:400;color:#fff;">Быстрый доступ</div>
<div class="w" style="left:51.3px;top:43.05px;font-size:11.4px;line-height:14px;font-weight:400;color:#fff;">Рабочий сто.</div>
<div class="w" style="left:51.3px;top:66.05px;font-size:11.4px;line-height:14px;font-weight:400;color:#fff;">Загрузки</div>
<div class="w" style="left:51.3px;top:89.05px;font-size:11.4px;line-height:14px;font-weight:400;color:#fff;">Документы</div>
<div class="w" style="left:51.3px;top:112.05px;font-size:11.4px;line-height:14px;font-weight:400;color:#fff;">Изображени</div>
<div class="w" style="left:51.3px;top:135.05px;font-size:11.4px;line-height:14px;font-weight:400;color:#fff;">future_services</div>
<div class="w" style="left:51.3px;top:158.05px;font-size:11.4px;line-height:14px;font-weight:400;color:#fff;">Rocket_Group</div>
<div class="w" style="left:51.3px;top:181.05px;font-size:11.4px;line-height:14px;font-weight:400;color:#fff;">ЖИЛЬЕ СЛОИ-2</div>
<div class="w" style="left:51.3px;top:204.05px;font-size:11.4px;line-height:14px;font-weight:400;color:#fff;">Сценарии</div>
<div class="w" style="left:43.8px;top:235.55px;font-size:11.4px;line-height:14px;font-weight:400;color:#fff;">Этот компьютер</div>
<div class="w" style="left:51.3px;top:258.55px;font-size:11.4px;line-height:14px;font-weight:400;color:#fff;">Видео</div>
</div><div class="b" style="left:499px;top:523.5px;width:0;height:0"></div>
<div class="w" style="left:472.0px;top:537.12px;font-size:11.2px;line-height:14px;font-weight:400;color:#fff;">Имя файла:</div>
<div class="w" style="left:543.0px;top:537.25px;font-size:11.4px;line-height:14px;font-weight:400;color:#fff;">border.geojson</div>
<div class="w" style="left:926.6px;top:537.06px;font-size:10.8px;line-height:14px;font-weight:400;color:#fff;">GEOJSON-файл (*.geojson)</div>
<div class="w" style="left:814.2px;width:300px;text-align:center;top:566.05px;font-size:11.4px;line-height:14px;font-weight:400;color:#fff;">Открыть</div>
<div class="w" style="left:910.2px;width:300px;text-align:center;top:566.05px;font-size:11.4px;line-height:14px;font-weight:400;color:#fff;">Отмена</div>
</body></html>
